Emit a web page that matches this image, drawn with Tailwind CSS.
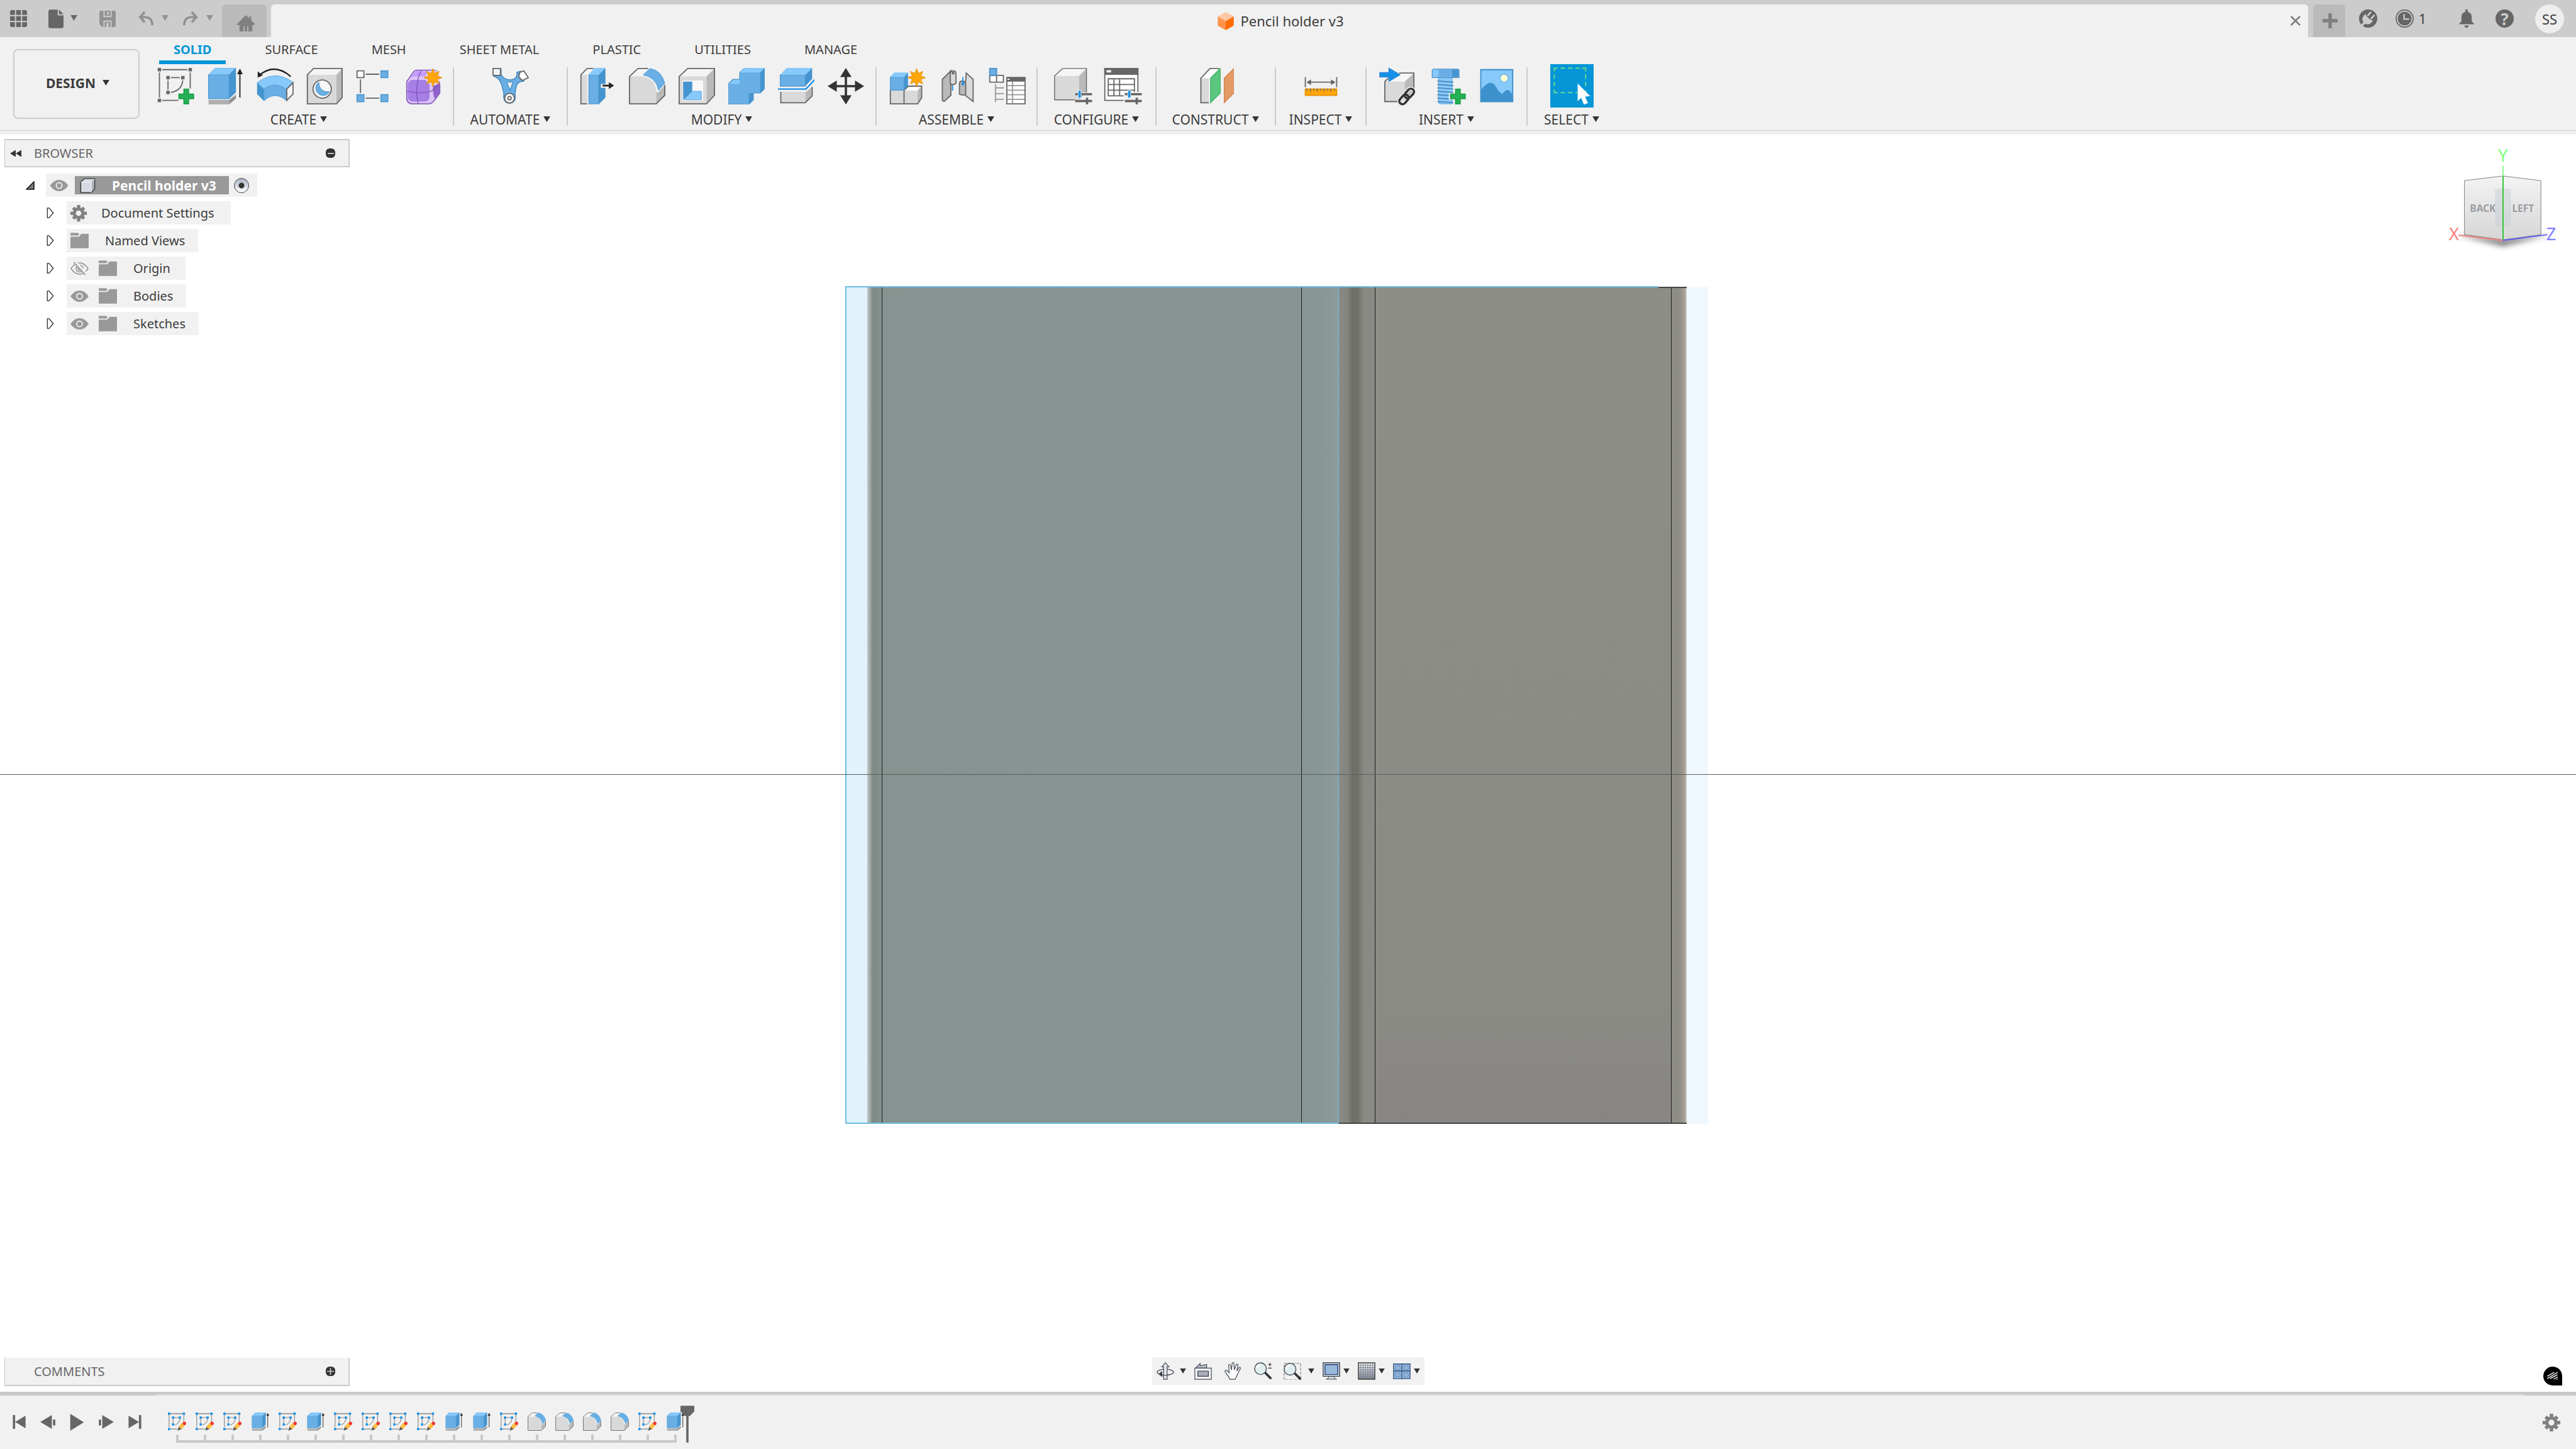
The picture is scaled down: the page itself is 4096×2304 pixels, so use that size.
<!DOCTYPE html>
<html lang="en">
	<head>
		<meta charset="UTF-8" />
		<meta name="viewport" content="width=device-width, initial-scale=1.0" />
		<title>Pencil holder v3</title>
		<script src="https://cdn.jsdelivr.net/npm/@tailwindcss/browser@4"></script>
	</head>
	<body class="h-screen flex flex-col overflow-hidden bg-white text-[21px] leading-7 text-[#3c3c3c] font-['Noto_Sans',sans-serif]">
		<!-- shared icons -->
		<svg class="hidden">
			<symbol id="caret" viewBox="0 0 12 10"><path d="M0 0h12L6 10z" fill="currentColor" /></symbol>
			<symbol id="gear" viewBox="-16 -16 32 32">
				<g fill="currentColor">
					<path fill-rule="evenodd" d="M-10.5 0a10.5 10.5 0 1 0 21 0a10.5 10.5 0 1 0 -21 0zM-5 0a5 5 0 1 1 10 0a5 5 0 1 1 -10 0z" />
					<path d="M-3-15h6v6h-6zM-3 9h6v6h-6zM-15-3h6v6h-6zM9-3h6v6H9z" />
					<path transform="rotate(45)" d="M-3-14h6v5h-6zM-3 9h6v5h-6zM-14-3h5v6h-5zM9-3h5v6H9z" />
				</g>
			</symbol>
			<symbol id="folder" viewBox="0 0 32 28">
				<path d="M0 0h13l2.5 2l-2 2.5H0zM0 6.5h15l4-5h13V27H0z" fill="#999" />
			</symbol>
			<symbol id="eye" viewBox="0 0 32 22">
				<path d="M0 11Q7 1 16 1t16 10Q25 21 16 21T0 11z" fill="#999" />
				<circle cx="16" cy="11" r="5" fill="#999" stroke="#f1f1f1" stroke-width="2" />
			</symbol>
			<symbol id="eye-off" viewBox="0 0 32 24">
				<g fill="none" stroke="#999" stroke-width="2">
					<path d="M1 12Q8 2 16 2t15 10Q24 22 16 22T1 12z" />
					<circle cx="16" cy="12" r="6" />
					<circle cx="16" cy="12" r="2.5" />
				</g>
				<path d="M8 0L28 22" stroke="#f1f1f1" stroke-width="5" />
				<path d="M6 1L26 23" stroke="#999" stroke-width="2" />
			</symbol>
			<symbol id="expand" viewBox="0 0 12 18"><path d="M1 1h3l7 8l-7 8H1z" fill="#fff" stroke="#222" stroke-width="1.3" /></symbol>
			<symbol id="plus" viewBox="0 0 28 28"><path d="M10 1h8v9h9v8h-9v9h-8v-9H1v-8h9z" fill="#25b254" stroke="#1f9e49" stroke-width="2" /></symbol>
			<symbol id="star" viewBox="-17 -17 34 34">
				<path d="M0-16L3-7.5L11-11L7.5-3L16 0L7.5 3L11 11L3 7.5L0 16L-3 7.5L-11 11L-7.5 3L-16 0L-7.5-3L-11-11L-3-7.5z" fill="#ffa60a" stroke="#e08e00" stroke-width="1" />
			</symbol>
			<symbol id="extrude" viewBox="0 0 64 64">
				<path d="M4 56h36v8H4z" fill="#b0b0b0" />
				<path d="M40 56l12-9v7L40 64z" fill="#949494" />
				<path d="M4 12h36v42H4z" fill="#69afe5" stroke="#539bd1" stroke-width="1.5" />
				<path d="M4 12L16 0h36L40 12z" fill="#87c9fb" stroke="#5ea7dc" stroke-width="1" />
				<path d="M40 12L52 0v43L40 54z" fill="#4594cf" />
				<path d="M59 8v44" stroke="#222" stroke-width="2" />
				<path d="M59 1l5 10H54z" fill="#222" />
			</symbol>
			<symbol id="fillet" viewBox="0 0 64 64">
				<path d="M0 15L15 0h21L22 14z" fill="#f5f5f5" />
				<path d="M1 15h22Q48 18 48 44v19H1z" fill="#d9d9d9" />
				<path d="M48 43l15-14v19L48 63z" fill="#b9b9b9" />
				<path d="M34 1H16L1 15v48h47l15-15V29" fill="none" stroke="#666" stroke-width="2" />
				<path d="M37 0Q58 4 64 27L51 42Q49 18 23 13z" fill="#69afe5" stroke="#f5f5f5" stroke-width="2" />
				<path d="M37 1Q57 4 63 27L52 39Q48 17 25 12z" fill="#69afe5" stroke="#539bd1" stroke-width="1" />
			</symbol>
			<symbol id="sketch" viewBox="0 0 32 32">
				<g fill="none" stroke="#999" stroke-width="1.5">
					<path d="M4 2h22" stroke-width="2" />
					<path d="M2 4v22M28 4v14M4 29h13M11 9h8M9 11v8M21 11q-1 8-9 11" />
				</g>
				<path d="M0 0h4v4H0zM26 0h4v4h-4zM0 27h4v4H0zM7 7h4v4H7zM19 7h4v4h-4zM7 19h4v4H7z" fill="#1890e8" />
				<path d="M19 25l6-7l5 4l-6 7z" fill="#ffc043" stroke="#e9a52e" stroke-width=".5" />
				<path d="M19 25l5 4l-7 3z" fill="#555" />
				<circle cx="29" cy="19" r="3" fill="#f23535" />
			</symbol>
			<symbol id="sliders" viewBox="0 0 30 26">
				<path d="M0 5h30v5H0zM0 17h30v5H0z" fill="#f1f1f1" />
				<path d="M0 6h30v4H0zM0 18h30v4H0zM19 14h4v12h-4z" fill="#666" />
				<path d="M5 1h6v14H5z" fill="#f1f1f1" />
				<path d="M6 2h4v12H6z" fill="#1890e8" />
			</symbol>
		</svg>

		<!-- title bar -->
		<header class="flex h-[59px] shrink-0 items-end bg-[#ccc] text-[#666]">
			<div class="flex h-full w-[353px] shrink-0 items-center pl-4">
				<button aria-label="Data panel">
					<svg class="h-[27px] w-[27px]" viewBox="0 0 28 28" fill="#666"><path d="M2 0h6v8H0V2zM10 0h8v8h-8zM20 0h6l2 2v6h-8zM0 10h8v8H0zM10 10h8v8h-8zM20 10h8v8h-8zM0 20h8v8H2l-2-2zM10 20h8v8h-8zM20 20h8v6l-2 2h-6z" /></svg>
				</button>
				<button class="ml-[34px] flex items-center gap-2.5" aria-label="File">
					<svg class="h-[30px] w-6" viewBox="0 0 26 32" fill="#666"><path d="M2 0h14v10h10v20l-2 2H2l-2-2V2zM18 0l8 8h-8z" /></svg>
					<svg class="mb-0.5 h-[9px] w-[13px]"><use href="#caret" /></svg>
				</button>
				<button class="ml-[34px]" aria-label="Save">
					<svg class="h-[26px] w-[26px]" viewBox="0 0 28 28" fill="#929292"><path fill-rule="evenodd" d="M2 0h24l2 2v24l-2 2H5l-5-5V2zM7 0v11h14V0h-2v9H9V0zM7 28V17h14v11h-2v-9H9v9zM12 21h4v7h-4zM13 2h3v5h-3z" /></svg>
				</button>
				<button class="ml-[36px] flex items-center gap-3 text-[#929292]" aria-label="Undo">
					<svg class="h-6 w-6" viewBox="0 0 26 26" fill="none" stroke="#929292" stroke-width="4"><path d="M11 1L3 10l8 9M3 10h8q13 0 13 14" /></svg>
					<svg class="mb-0.5 h-[9px] w-[13px]"><use href="#caret" /></svg>
				</button>
				<button class="ml-[22px] flex items-center gap-3 text-[#929292]" aria-label="Redo">
					<svg class="h-6 w-6" viewBox="0 0 26 26" fill="none" stroke="#929292" stroke-width="4"><path d="M15 1l8 9l-8 9M23 10h-8Q2 10 2 24" /></svg>
					<svg class="mb-0.5 h-[9px] w-[13px]"><use href="#caret" /></svg>
				</button>
			</div>
			<button class="flex h-[52px] w-[71px] shrink-0 items-center justify-center rounded-t-md bg-[#bababa] pl-1 pt-2" aria-label="Home">
				<svg class="h-[26px] w-[28px]" viewBox="0 0 30 28" fill="#808080"><path d="M15 0l6 6V2h3v7l6 6v2h-4v11h-7v-9h-2v9h-4v-9h-2v9H4V17H0v-2z" /><path d="M13 20h4v8h-4z" /></svg>
			</button>
			<div class="ml-[7px] flex h-[52px] grow items-center rounded-t-md bg-[#f1f1f1] pr-3">
				<h1 class="flex grow items-center justify-center gap-2.5 text-[22px] text-[#3c3c3c]">
					<svg class="h-[29px] w-[26px]" viewBox="0 0 28 32"><path d="M14 0l14 8l-14 8L0 8z" fill="#ffc7a3" /><path d="M0 8l14 8v16L0 24z" fill="#ff924a" /><path d="M28 8l-14 8v16l14-8z" fill="#ff6b00" /></svg>
					Pencil holder v3
				</h1>
				<button aria-label="Close">
					<svg class="h-4 w-4" viewBox="0 0 18 18" stroke="#808080" stroke-width="3"><path d="M1 1l16 16M17 1L1 17" /></svg>
				</button>
			</div>
			<button class="ml-2 flex h-[52px] w-[51px] shrink-0 items-center justify-center rounded-t-md bg-[#bababa] pl-1" aria-label="New tab">
				<svg class="h-6 w-6" viewBox="0 0 26 26" fill="#808080"><path d="M10 0h6v10h10v6H16v10h-6V16H0v-6h10z" /></svg>
			</button>
			<div class="flex h-full shrink-0 items-center pl-[22px] pr-[19px]">
				<button aria-label="Extensions">
					<svg class="h-[29px] w-[29px]" viewBox="0 0 32 32"><circle cx="16" cy="16" r="16" fill="#666" /><g transform="rotate(42 16 16)"><path d="M7 13q9 4 18 0v4q0 8-7 9v8h-4v-8q-7-1-7-9z" fill="#ccc" /><path d="M12 4v9M20 4v9" stroke="#ccc" stroke-width="3" /></g></svg>
				</button>
				<button class="ml-[29px] flex items-center gap-2 text-[#3c3c3c]" aria-label="Job status">
					<svg class="h-[29px] w-[29px]" viewBox="0 0 32 32"><circle cx="16" cy="16" r="15" fill="none" stroke="#666" stroke-width="2" /><circle cx="16" cy="16" r="12" fill="#666" /><path d="M15 8v9h9" fill="none" stroke="#ccc" stroke-width="2.5" /></svg>
					1
				</button>
				<button class="ml-[52px]" aria-label="Notifications">
					<svg class="h-[29px] w-6" viewBox="0 0 26 32" fill="#666"><path d="M11 0h4v4q7 2 7 9v8l4 4v1H0v-1l4-4v-8q0-7 7-9zM9 28h8q-1 4-4 4t-4-4z" /></svg>
				</button>
				<button class="ml-[34px] flex size-[29px] items-center justify-center rounded-full bg-[#666] text-[26px] font-bold text-[#ccc]" aria-label="Help">?</button>
				<button class="ml-[34px] flex size-[46px] items-center justify-center rounded-full bg-[#eee] text-[22px] text-[#3c3c3c]" aria-label="Account">SS</button>
			</div>
		</header>

		<!-- ribbon -->
		<div class="flex h-[149px] shrink-0 border-b border-[#ccc] bg-[#f1f1f1]">
			<button class="ml-[21px] mt-[19px] flex h-[111px] w-[201px] shrink-0 items-center justify-center gap-[11px] rounded-lg border-2 border-[#ccc] pb-1 pl-1 font-bold">
				DESIGN <svg class="h-[9px] w-[11px] text-[#333]"><use href="#caret" /></svg>
			</button>
			<div class="flex flex-col">
				<nav class="ml-[31px] flex h-[43px] gap-[39px] text-[20px]">
					<a href="#" class="border-b-[6px] border-[#0696d7] px-[23px] pt-[6px] font-bold text-[#0696d7]">SOLID</a>
					<a href="#" class="px-[23px] pt-[6px]">SURFACE</a>
					<a href="#" class="px-[23px] pt-[6px]">MESH</a>
					<a href="#" class="px-[23px] pt-[6px]">SHEET METAL</a>
					<a href="#" class="px-[23px] pt-[6px]">PLASTIC</a>
					<a href="#" class="px-[23px] pt-[6px]">UTILITIES</a>
					<a href="#" class="px-[23px] pt-[6px]">MANAGE</a>
				</nav>
				<div class="ml-2 mt-[5px] flex h-[93px]">
					<section class="flex w-[492px] flex-col items-center justify-between border-r-2 border-[#ccc] pt-px">
						<div class="flex h-[58px] gap-[21px]">
							<button aria-label="Create sketch">
								<svg class="size-[58px] overflow-visible" viewBox="0 0 64 64"><path d="M2 0h6v6H2zM56 0h6v6h-6zM2 54h6v6H2zM17 14h6v6h-6zM43 14h6v6h-6zM17 40h6v6h-6z" fill="#666" /><path d="M10 3h44M5 8v44M59 8v28M10 57h28M25 17h16M20 22v16M46 22q-2 18-21 21" fill="none" stroke="#666" stroke-width="2" /><use href="#plus" x="38" y="36" width="28" height="28" /></svg>
							</button>
							<button aria-label="Extrude"><svg class="size-[58px]"><use href="#extrude" /></svg></button>
							<button aria-label="Revolve">
								<svg class="size-[58px] overflow-visible" viewBox="0 0 64 64"><path d="M2 26Q33 2 65 25L53 37Q33 23 14 37z" fill="#87c9fb" stroke="#5aa2d8" /><path d="M14 37Q33 23 53 37v20Q33 40 14 58z" fill="#69afe5" stroke="#539bd1" /><path d="M2 26l12 11v21L2 46z" fill="#4594cf" /><path d="M54 37l11-11v20L54 57z" fill="#f5f5f5" stroke="#666" stroke-width="2" /><path d="M61 15Q33-9 7 12" fill="none" stroke="#222" stroke-width="2.5" /><path d="M3 17V6l9 7z" fill="#222" /></svg>
							</button>
							<button aria-label="Hole">
								<svg class="size-[58px] overflow-visible" viewBox="0 0 64 64"><path d="M3 12L14 1h50L54 12z" fill="#f4f4f4" /><path d="M3 12h51v51H3z" fill="#d9d9d9" /><path d="M54 12L64 1v51L54 63z" fill="#b9b9b9" /><path d="M3 12L14 1h50v51L54 63H3z" fill="none" stroke="#666" stroke-width="2" /><circle cx="29" cy="37" r="16" fill="#f7f7f7" stroke="#666" stroke-width="2" /><path d="M23 25a13 13 0 1 0 19 17Q24 43 23 25z" fill="#69afe5" stroke="#4594cf" /></svg>
							</button>
							<button aria-label="Rectangular pattern">
								<svg class="size-[58px]" viewBox="0 0 64 64"><path d="M18 11h24M9 20v24M18 53h24" stroke="#666" stroke-width="2" /><path d="M3 5h12v12H3z" fill="#fff" stroke="#666" stroke-width="2" /><path d="M45 5h12v12H45zM3 47h12v12H3zM45 47h12v12H45z" fill="#69afe5" stroke="#4f9ad2" stroke-width="2" /></svg>
							</button>
							<button aria-label="Create form">
								<svg class="size-[58px] overflow-visible" viewBox="0 0 64 64"><path d="M3 24L15 7q2-3 7-3h28q6 0 7 5l4 21v14L50 59q-4 4-9 4H14Q3 63 3 52z" fill="#dcc4f7" stroke="#8a63bd" stroke-width="2" /><path d="M10 17L17 8q3-3 7-2h14l2 10q-16-3-30 1z" fill="#c59bff" /><rect x="5" y="21" width="38" height="38" rx="8" fill="#a77de6" /><path d="M49 32l12-5v16l-8 12q-5-8-4-23z" fill="#8f62cb" /><path d="M23 63q-5-22 0-45l5-13M3 41q25 5 43 0l14-12" fill="none" stroke="#7f57b4" stroke-width="1.5" /><circle cx="49" cy="17" r="13" fill="#e9d9fb" /><use href="#star" x="32" y="0" width="34" height="34" /></svg>
							</button>
						</div>
						<button class="-mb-1 flex items-center gap-1.5 leading-7">CREATE <svg class="mb-0.5 h-[9px] w-[11px] text-[#333]"><use href="#caret" /></svg></button>
					</section>
					<section class="flex w-[181px] flex-col items-center justify-between border-r-2 border-[#ccc] pt-px">
						<div class="flex h-[58px] gap-[21px]">
							<button aria-label="Automated modeling">
								<svg class="size-[58px]" viewBox="0 0 64 64"><path d="M15 2v9q4 10 17 10q12-1 11-13l6-2l6 17q-12 0-14 12q-2 9-1 17a10 10 0 1 1-20 0q1-8-2-16Q14 17 3 15V2z" fill="#69afe5" stroke="#4f90c4" stroke-width="2" /><path d="M25 25h11l-5 14z" fill="#f1f1f1" stroke="#4f90c4" stroke-width="1.5" /><path d="M1 1h13v12H1z" fill="#f4f4f4" stroke="#666" stroke-width="2" /><path d="M55 5l8 12l-10 5l-7-6l2-8z" fill="#fff" stroke="#666" stroke-width="2" /><circle cx="30" cy="53" r="8.5" fill="#fff" stroke="#666" stroke-width="2" /><circle cx="30" cy="53" r="3" fill="none" stroke="#666" stroke-width="2" /></svg>
							</button>
						</div>
						<button class="-mb-1 flex items-center gap-1.5 leading-7">AUTOMATE <svg class="mb-0.5 h-[9px] w-[11px] text-[#333]"><use href="#caret" /></svg></button>
					</section>
					<section class="flex w-[491px] flex-col items-center justify-between border-r-2 border-[#ccc] pt-px">
						<div class="flex h-[58px] gap-[21px]">
							<button aria-label="Press pull">
								<svg class="size-[58px]" viewBox="0 0 64 64"><path d="M3 12L14 1h11L14 12z" fill="#f5f5f5" /><path d="M3 12h11v51H3z" fill="#d9d9d9" /><path d="M25 1H14L3 12v51h11" fill="none" stroke="#666" stroke-width="2" /><path d="M17 12h17v51H17z" fill="#69afe5" stroke="#539bd1" stroke-width="1.5" /><path d="M16 12L27 0h19L34 12z" fill="#87c9fb" /><path d="M34 12L46 0v52L34 64z" fill="#4594cf" /><path d="M38 28h13v-5l13 8l-13 9v-5H38z" fill="#f1f1f1" /><path d="M41 31h14" stroke="#222" stroke-width="3" /><path d="M52 25l9 6l-9 6z" fill="#222" /></svg>
							</button>
							<button aria-label="Fillet"><svg class="size-[58px]"><use href="#fillet" /></svg></button>
							<button aria-label="Shell">
								<svg class="size-[58px]" viewBox="0 0 64 64"><path d="M1 15L16 1h47L49 15z" fill="#f4f4f4" /><path d="M1 15h48v48H1z" fill="#d9d9d9" /><path d="M49 15L63 1v47L49 63z" fill="#b9b9b9" /><path d="M1 15L16 1h47v47L49 63H1z" fill="none" stroke="#666" stroke-width="2" /><path d="M7 22h36v36H7z" fill="#f8f8f8" /><path d="M8 24h16v17L8 56z" fill="#4594cf" /><path d="M24 41h16v15H9z" fill="#87c9fb" stroke="#5aa2d8" /></svg>
							</button>
							<button aria-label="Combine">
								<svg class="size-[58px]" viewBox="0 0 64 64"><path d="M0 28l8-8h12V8l9-8h35v36l-8 8H44v12l-8 8H0z" fill="#69afe5" stroke="#539bd1" stroke-width="1.5" /><path d="M20 8l9-8h35l-8 8zM1 28l8-7h11v7z" fill="#87c9fb" /><path d="M56 8l8-8v36l-8 8zM36 44h8v12l-8 8z" fill="#4594cf" /></svg>
							</button>
							<button aria-label="Split body">
								<svg class="size-[58px]" viewBox="0 0 64 64"><path d="M4 12h44v20H4z" fill="#69afe5" stroke="#539bd1" stroke-width="1.5" /><path d="M4 12L15 0h45L48 12z" fill="#87c9fb" /><path d="M48 12L60 0v19L48 32z" fill="#4594cf" /><path d="M5 42h43v19H5z" fill="#d9d9d9" /><path d="M48 43l12-10v17L48 61z" fill="#b9b9b9" /><path d="M5 42v19h43l12-12V33" fill="none" stroke="#666" stroke-width="2" /><path d="M0 37h49l15-16" fill="none" stroke="#1890e8" stroke-width="2.5" /></svg>
							</button>
							<button aria-label="Move">
								<svg class="size-[58px]" viewBox="0 0 64 64" fill="#333"><path d="M30 14h4v36h-4zM14 30h36v4H14zM32 0l10 16H22zM32 64L22 48h20zM0 32l16-10v20zM64 32L48 42V22z" /></svg>
							</button>
						</div>
						<button class="-mb-1 flex items-center gap-1.5 leading-7">MODIFY <svg class="mb-0.5 h-[9px] w-[11px] text-[#333]"><use href="#caret" /></svg></button>
					</section>
					<section class="flex w-[256px] flex-col items-center justify-between border-r-2 border-[#ccc] pt-px">
						<div class="flex h-[58px] gap-[21px]">
							<button aria-label="New component">
								<svg class="size-[58px] overflow-visible" viewBox="0 0 64 64"><path d="M3 39h49v24H3z" fill="#d9d9d9" /><path d="M27 39l8-7h23l-7 8z" fill="#fff" /><path d="M51 39l7-7v20l-7 11z" fill="#b9b9b9" /><path d="M3 39v24h48l7-11V32H35l-8 7v24" fill="none" stroke="#666" stroke-width="2" /><path d="M3 16h24v23H3z" fill="#69afe5" stroke="#539bd1" stroke-width="1.5" /><path d="M2 16l8-8h24l-7 8z" fill="#87c9fb" /><path d="M27 16l7-8v24l-7 7z" fill="#4594cf" /><circle cx="49" cy="17" r="13" fill="#f1f1f1" /><use href="#star" x="32" y="0" width="34" height="34" /></svg>
							</button>
							<button aria-label="Joint">
								<svg class="size-[58px]" viewBox="0 0 64 64" stroke="#666" stroke-width="2"><path d="M7 20L22 5v43L10 59l-3-2z" fill="#b9b9b9" /><path d="M21 10q0-5 5-5t5 5v17q-4 4-10 1z" fill="#d9d9d9" /><circle cx="26" cy="9" r="1.5" fill="#666" /><path d="M49 9l12 11v39L46 47z" fill="#d9d9d9" /><path d="M37 28q0-5 5-5t6 5v18q-5 3-11 0z" fill="#b9b9b9" /><path d="M25 30v10M43 16v12" stroke="#1890e8" /><circle cx="43" cy="28" r="1.5" fill="#1890e8" stroke="#1890e8" /></svg>
							</button>
							<button aria-label="Bill of materials">
								<svg class="size-[58px] overflow-visible" viewBox="0 0 64 64"><path d="M3 13h12v12H3zM15 13h12v12H15z" fill="#fff" stroke="#666" stroke-width="2" /><path d="M3 1h12v12H3z" fill="#69afe5" stroke="#4f90c4" stroke-width="2" /><path d="M13 28v32M13 35h15M13 45h15M13 55h15" stroke="#999" stroke-width="2" /><path d="M33 17h32v46H33z" fill="#fff" stroke="#666" stroke-width="2" /><path d="M33 16h32v8H33z" fill="#666" /><path d="M34 19h4v2h-4z" fill="#fff" /><path d="M34 31h30M34 39h30M34 47h30M34 55h30M43 24v38" stroke="#999" stroke-width="2" /></svg>
							</button>
						</div>
						<button class="-mb-1 flex items-center gap-1.5 leading-7">ASSEMBLE <svg class="mb-0.5 h-[9px] w-[11px] text-[#333]"><use href="#caret" /></svg></button>
					</section>
					<section class="flex w-[189px] flex-col items-center justify-between border-r-2 border-[#ccc] pt-px">
						<div class="flex h-[58px] gap-[21px]">
							<button aria-label="Configure model">
								<svg class="size-[58px] overflow-visible" viewBox="0 0 64 64"><path d="M2 14L16 1h42L45 14z" fill="#f6f6f6" /><path d="M2 14h43v42H2z" fill="#d9d9d9" /><path d="M45 14L58 1v42L45 56z" fill="#b9b9b9" /><path d="M45 56H2V14L16 1h42v42" fill="none" stroke="#666" stroke-width="1.5" /><use href="#sliders" x="38" y="38" width="30" height="26" /></svg>
							</button>
							<button aria-label="Configuration table">
								<svg class="size-[58px] overflow-visible" viewBox="0 0 64 64"><path d="M3 1h58v56H3z" fill="#fff" stroke="#666" stroke-width="2" /><path d="M2 0h60v12H2z" fill="#666" /><path d="M6 4h8v4H6z" fill="#fff" /><path d="M9 19h46v30H9zM9 29h46M9 39h46M19 19v30M29 19v30" fill="none" stroke="#666" stroke-width="2" /><path d="M36 42h28v22H36z" fill="#f1f1f1" /><use href="#sliders" x="38" y="38" width="30" height="26" /></svg>
							</button>
						</div>
						<button class="-mb-1 flex items-center gap-1.5 leading-7">CONFIGURE <svg class="mb-0.5 h-[9px] w-[11px] text-[#333]"><use href="#caret" /></svg></button>
					</section>
					<section class="flex w-[190px] flex-col items-center justify-between border-r-2 border-[#ccc] pt-px">
						<div class="flex h-[58px] gap-[21px]">
							<button aria-label="Offset plane">
								<svg class="size-[58px]" viewBox="0 0 64 64"><path d="M6 18L22 1h15L21 18z" fill="#fff" /><path d="M6 18h14v43H6z" fill="#d9d9d9" /><path d="M38 1H22L6 18v43h14" fill="none" stroke="#666" stroke-width="2" /><path d="M23 18L40 1v43L23 61z" fill="#5bc77f" stroke="#44b56a" stroke-width="1.5" /><path d="M47 18L64 1v43L47 61z" fill="#e69a66" stroke="#d1854f" stroke-width="1.5" /></svg>
							</button>
						</div>
						<button class="-mb-1 flex items-center gap-1.5 leading-7">CONSTRUCT <svg class="mb-0.5 h-[9px] w-[11px] text-[#333]"><use href="#caret" /></svg></button>
					</section>
					<section class="flex w-[144px] flex-col items-center justify-between border-r-2 border-[#ccc] pt-px">
						<div class="flex h-[58px] gap-[21px]">
							<button aria-label="Measure">
								<svg class="size-[58px]" viewBox="0 0 64 64"><path d="M5 16v18M60 16v18M10 25h45" stroke="#666" stroke-width="2" /><path d="M7 25l8-5v10zM58 25l-8-5v10z" fill="#666" /><path d="M5 37h55v11H5z" fill="#ffa60a" stroke="#e89400" stroke-width="2" /><path d="M8 36v4M14 36v6M20 36v4M26 36v6M32 36v4M38 36v6M44 36v4M50 36v6M56 36v4" stroke="#666" stroke-width="1.5" /></svg>
							</button>
						</div>
						<button class="-mb-1 flex items-center gap-1.5 leading-7">INSPECT <svg class="mb-0.5 h-[9px] w-[11px] text-[#333]"><use href="#caret" /></svg></button>
					</section>
					<section class="flex w-[256px] flex-col items-center justify-between border-r-2 border-[#ccc] pt-px">
						<div class="flex h-[58px] gap-[21px]">
							<button aria-label="Insert derive">
								<svg class="size-[58px] overflow-visible" viewBox="0 0 64 64"><path d="M11 24L26 9h36L46 24z" fill="#f6f6f6" /><path d="M11 24h35v35H11z" fill="#d9d9d9" /><path d="M46 24L62 9v36L46 59z" fill="#b9b9b9" /><path d="M40 59H11V24l6-6M36 9h26v30" fill="none" stroke="#666" stroke-width="2" /><path d="M2 8h16V0l20 12l-20 12v-8H2z" fill="#1890e8" stroke="#1478c8" /><g transform="rotate(-48 50 50)" fill="none"><rect x="33" y="44" width="18" height="11" rx="5.5" stroke="#f1f1f1" stroke-width="7" /><rect x="48" y="44" width="18" height="11" rx="5.5" stroke="#f1f1f1" stroke-width="7" /><rect x="33" y="44" width="19" height="11" rx="5.5" stroke="#333" stroke-width="4" /><rect x="47" y="44" width="19" height="11" rx="5.5" stroke="#333" stroke-width="4" /></g></svg>
							</button>
							<button aria-label="Insert fastener">
								<svg class="size-[58px] overflow-visible" viewBox="0 0 64 64"><path d="M18 17h24v46H20l-2-3z" fill="#87c9fb" stroke="#69afe5" stroke-width="1.5" /><path d="M7 4l2-2h43l2 2v13H7z" fill="#87c9fb" stroke="#4f90c4" stroke-width="1.5" /><path d="M18 3h24v13H18z" fill="#69afe5" /><path d="M42 3h11v13H42z" fill="#4594cf" /><path d="M16 23l28 2M16 29l28 2M16 35l28 2M16 41l28 2M16 47l28 2M16 53l28 2M16 59l28 2" stroke="#4682b0" stroke-width="1.8" /><path d="M46 34h12v10h10v12H58v9H46v-9H36V44h10z" fill="#f1f1f1" /><use href="#plus" x="38" y="36" width="28" height="28" /></svg>
							</button>
							<button aria-label="Insert canvas">
								<svg class="size-[58px]" viewBox="0 0 64 64"><path d="M5 3h56v56H5z" fill="#87c9fb" stroke="#3f8cc6" stroke-width="2" /><circle cx="46" cy="18" r="7" fill="#ffffd2" stroke="#6fb4e4" stroke-width="1.5" /><path d="M5 39Q15 26 22 26t13 13l7 7l5-5q6-5 9 0l5 6v12H5z" fill="#3d91cc" /></svg>
							</button>
						</div>
						<button class="-mb-1 flex items-center gap-1.5 leading-7">INSERT <svg class="mb-0.5 h-[9px] w-[11px] text-[#333]"><use href="#caret" /></svg></button>
					</section>
					<section class="flex w-[140px] flex-col items-center justify-between pt-px">
						<button class="-mt-1.5 size-[69px] bg-[#0696d7]" aria-label="Select">
							<svg class="size-[69px]" viewBox="0 0 76 76"><path d="M7 13V7h6M56 7h6v6M7 44v6h6M18 7h8M31 7h8M44 7h8M18 50h8M31 50h8M44 50h4M7 18v8M7 31v8M62 18v8M62 31v7M62 46v4h-4" fill="none" stroke="#6fe08a" stroke-width="2" /><path d="M48 34l22 22l-9 1l5 11l-7 3l-5-12l-6 6z" fill="#fff" /></svg>
						</button>
						<button class="-mb-1 flex items-center gap-1.5 leading-7">SELECT <svg class="mb-0.5 h-[9px] w-[11px] text-[#333]"><use href="#caret" /></svg></button>
					</section>
				</div>
			</div>
		</div>

		<!-- viewport -->
		<main class="relative flex grow flex-col justify-between border-t-[6px] border-[#f1f1f1] px-[7px] pb-[9px] pt-[7px]">
			<svg class="absolute inset-0 h-full w-full" viewBox="0 234 4480 2186" preserveAspectRatio="none">
				<defs>
					<linearGradient id="leftFace"><stop offset="0" stop-color="#c3cbc8" /><stop offset=".012" stop-color="#7e8885" /><stop offset=".033" stop-color="#869391" /><stop offset=".92" stop-color="#879493" /><stop offset=".96" stop-color="#879796" /><stop offset="1" stop-color="#8e9c9b" /></linearGradient>
					<linearGradient id="fold"><stop offset="0" stop-color="#8b8b86" /><stop offset=".25" stop-color="#84847e" /><stop offset=".37" stop-color="#70706a" /><stop offset=".52" stop-color="#71716b" /><stop offset=".68" stop-color="#898984" /><stop offset="1" stop-color="#8b8b85" /></linearGradient>
					<linearGradient id="rightEdge"><stop offset="0" stop-color="#8d8d87" /><stop offset=".45" stop-color="#8d8c85" /><stop offset=".8" stop-color="#9f9a90" /><stop offset="1" stop-color="#bab8af" /></linearGradient>
					<linearGradient id="rightFace" x2="0" y2="1"><stop offset="0" stop-color="#8e8e88" /><stop offset=".85" stop-color="#8b8b85" /><stop offset="1" stop-color="#888583" /></linearGradient>
					<linearGradient id="cubeFace" x2="0" y2="1"><stop offset="0" stop-color="#f3f3f3" /><stop offset="1" stop-color="#d6d6d6" /></linearGradient>
					<filter id="soft" x="-20%" y="-60%" width="140%" height="220%"><feGaussianBlur stdDeviation="5" /></filter>
				</defs>
				<path d="M1470 499h39v1455h-39z" fill="#e0f3fc" />
				<path d="M2933 499h38v1455h-38z" fill="#f0f8ff" />
				<path d="M1508 499h820v1455h-820z" fill="url(#leftFace)" />
				<path d="M2328 499h64v1455h-64z" fill="url(#fold)" />
				<path d="M2392 499h515v1455h-515z" fill="url(#rightFace)" />
				<path d="M2907 499h26v1455h-26z" fill="url(#rightEdge)" />
				<g fill="none" shape-rendering="crispEdges">
					<path d="M1534 499v1455M2263 499v1455M2392 499v1455M2907 499v1455" stroke="#1c1c1c" stroke-width="1.1" />
					<path d="M1534 1953h1399M2884 500h49" stroke="#444" stroke-width="2" />
					<path d="M2328 1953V499M2328 1953H1471V499H2884" stroke="#6bbde2" stroke-width="2" />
					<path d="M0 1347h4480" stroke="#5c5c5c" stroke-width="1.1" />
				</g>
				<!-- view cube -->
				<path d="M4270 408l83 8l83-8l-83 20z" fill="#777" filter="url(#soft)" />
				<path d="M4286 314l67-8v111l-67-9zM4353 306l66 8v94l-66 9z" fill="url(#cubeFace)" stroke="#777" />
				<path d="M4339 329l14-2l14 2v65l-14 2l-14-2z" fill="#c9cfd6" fill-opacity=".5" />
				<path d="M4353 288v18" stroke="#80ff80" stroke-width="2" />
				<path d="M4353 306v112" stroke="#2bc92b" stroke-width="2" />
				<path d="M4276 409l77 9" stroke="#f08080" stroke-width="2" />
				<path d="M4353 418l77-10" stroke="#6060f0" stroke-width="2" />
				<g font-family="'Noto Sans',sans-serif" text-anchor="middle">
					<text x="4353" y="281" font-size="30" fill="#80ff80">Y</text>
					<text x="4268" y="418" font-size="30" fill="#ff8080">X</text>
					<text x="4437" y="418" font-size="30" fill="#8080ff">Z</text>
					<text x="4318" y="368" font-size="17" font-weight="bold" fill="#9a9ea3">BACK</text>
					<text x="4388" y="368" font-size="17" font-weight="bold" fill="#9a9ea3">LEFT</text>
				</g>
			</svg>

			<!-- browser -->
			<aside class="relative w-[549px]">
				<div class="flex h-[45px] items-center border-y-2 border-l border-r-2 border-[#ccc] bg-[#f1f1f1] pl-2 pr-[21px] text-[#666]">
					<svg class="h-3 w-[18px]" viewBox="0 0 20 12" fill="#333"><path d="M10 0v12L0 6zM20 0v12L10 6z" /></svg>
					<h2 class="ml-5 grow text-[20px]">BROWSER</h2>
					<button class="flex size-[15px] items-center justify-center rounded-md bg-[#333]" aria-label="Collapse"><span class="h-0.5 w-2.5 bg-[#bbb]"></span></button>
				</div>
				<ul class="mt-2.5 flex flex-col gap-[7px] text-[20px]">
					<li class="flex h-[37px] items-center">
						<svg class="ml-[34px] h-[14px] w-[14px]" viewBox="0 0 14 14"><path d="M13 1v12H1z" fill="#777" stroke="#111" stroke-width="1.5" /></svg>
						<div class="ml-[18px] flex h-full items-center bg-[#f1f1f1] pl-[6px] pr-[13px]">
							<svg class="h-5 w-[30px]"><use href="#eye" /></svg>
							<span class="ml-[10px] flex h-[29px] w-[245px] items-center bg-[#999] pl-2 text-[21px] font-bold text-white">
								<svg class="mr-[26px] h-6 w-[25px]" viewBox="0 0 26 26"><path d="M1 7l6-6h18v18l-6 6H1z" fill="#d6dae3" stroke="#333" stroke-width="1.5" /><path d="M1 7h18v18M19 7l6-6" fill="none" stroke="#f7f7fb" /><path d="M20 7l4-5v16l-4 5z" fill="#a9aebb" /></svg>
								Pencil holder v3
							</span>
							<label class="ml-2 flex"><input type="radio" checked aria-label="Activate component" class="size-6 appearance-none rounded-full border border-[#444] bg-[radial-gradient(circle,#333_0_4px,transparent_5px),linear-gradient(#a9b2c4,#fff)]" /></label>
						</div>
					</li>
					<li class="flex h-[37px] items-center">
						<svg class="ml-[67px] h-[17px] w-3"><use href="#expand" /></svg>
						<div class="ml-5 flex h-full items-center bg-[#f1f1f1] pl-[5px] pr-[26px]"><svg class="mr-[22px] size-7 text-[#808080]"><use href="#gear" /></svg>Document Settings</div>
					</li>
					<li class="flex h-[37px] items-center">
						<svg class="ml-[67px] h-[17px] w-3"><use href="#expand" /></svg>
						<div class="ml-5 flex h-full items-center bg-[#f1f1f1] pl-[6px] pr-[21px]"><svg class="mr-[26px] h-[26px] w-[29px]"><use href="#folder" /></svg>Named Views</div>
					</li>
					<li class="flex h-[37px] items-center">
						<svg class="ml-[67px] h-[17px] w-3"><use href="#expand" /></svg>
						<div class="ml-5 flex h-full items-center bg-[#f1f1f1] pl-[6px] pr-6"><svg class="mr-4 h-[22px] w-[29px]"><use href="#eye-off" /></svg><svg class="mr-[26px] h-[26px] w-[29px]"><use href="#folder" /></svg>Origin</div>
					</li>
					<li class="flex h-[37px] items-center">
						<svg class="ml-[67px] h-[17px] w-3"><use href="#expand" /></svg>
						<div class="ml-5 flex h-full items-center bg-[#f1f1f1] pl-[6px] pr-[21px]"><svg class="mr-4 h-5 w-[29px]"><use href="#eye" /></svg><svg class="mr-[26px] h-[26px] w-[29px]"><use href="#folder" /></svg>Bodies</div>
					</li>
					<li class="flex h-[37px] items-center">
						<svg class="ml-[67px] h-[17px] w-3"><use href="#expand" /></svg>
						<div class="ml-5 flex h-full items-center bg-[#f1f1f1] pl-[6px] pr-[21px]"><svg class="mr-4 h-5 w-[29px]"><use href="#eye" /></svg><svg class="mr-[26px] h-[26px] w-[29px]"><use href="#folder" /></svg>Sketches</div>
					</li>
				</ul>
			</aside>

			<div class="relative grid grid-cols-[1fr_auto_1fr] items-end">
				<div class="flex h-[45px] w-[549px] items-center border-b-2 border-l border-r-2 border-[#ccc] bg-[#f1f1f1] pl-[46px] pr-[21px] text-[#666]">
					<h2 class="grow text-[20px]">COMMENTS</h2>
					<button class="flex size-[15px] items-center justify-center rounded-md bg-[#333]" aria-label="Expand"><svg class="size-[11px]" viewBox="0 0 10 10" stroke="#ccc" stroke-width="1.5"><path d="M5 0v10M0 5h10" /></svg></button>
				</div>
				<!-- navigation bar -->
				<div class="mb-0.5 flex h-11 items-center bg-[#f1f1f1] pl-[7px] pr-[6px] text-[#333]">
					<button class="flex items-center gap-2" aria-label="Orbit">
						<svg class="size-7" viewBox="0 0 30 30" fill="#e4e6ee" stroke="#444a55" stroke-width="1.3"><ellipse cx="15" cy="17" rx="14" ry="5" fill="none" /><path d="M12 29V8H9l6-7l6 7h-3v21z" /><path d="M10 22q6 1 12-1" fill="none" /><path d="M4 20l5-4v8z" fill="#333" /></svg>
						<svg class="h-2 w-3"><use href="#caret" /></svg>
					</button>
					<button class="ml-3" aria-label="Look at">
						<svg class="size-7" viewBox="0 0 30 30" stroke="#444a55" stroke-width="1.3"><path d="M3 9l7-7v4l11-2v6H3z" fill="#b9bfc8" /><path d="M1 10h28v19H1z" fill="#f4f4f8" /><path d="M6 15h18v9H6z" fill="#a9adba" stroke="#333c55" /></svg>
					</button>
					<button class="ml-5" aria-label="Pan">
						<svg class="size-7" viewBox="0 0 30 30" fill="#fbfbfc" stroke="#444a55" stroke-width="1.3"><path d="M9 29q-1-4-4-7l-4-6q0-3 3-2l4 4l-1-13q1-3 3 0l2 8l1-11q2-3 3 0l1 11l3-9q3-2 3 1l-2 10l4-6q3-1 2 2l-6 12q-1 4-3 6z" /></svg>
					</button>
					<button class="ml-[19px]" aria-label="Zoom">
						<svg class="size-7" viewBox="0 0 30 30"><path d="M19 18l9 9" stroke="#2c333c" stroke-width="4" stroke-linecap="round" /><circle cx="11" cy="11" r="10" fill="#dfeeee" stroke="#444a55" stroke-width="1.5" /><path d="M5 10q1-5 6-6" fill="none" stroke="#fff" stroke-width="3" /><path d="M27 1v6M24 4h6M24 10h6" stroke="#333" stroke-width="1.3" /></svg>
					</button>
					<button class="ml-[19px] flex items-center gap-2.5" aria-label="Fit">
						<svg class="size-7" viewBox="0 0 30 30"><path d="M1 2h28v28H1z" fill="none" stroke="#666" stroke-dasharray="5 2" /><path d="M19 19l9 9" stroke="#333" stroke-width="4" stroke-linecap="round" /><circle cx="11" cy="12" r="10" fill="#dfeeee" stroke="#444a55" stroke-width="1.5" /><path d="M5 11q1-5 6-6" fill="none" stroke="#fff" stroke-width="3" /></svg>
						<svg class="h-2 w-3"><use href="#caret" /></svg>
					</button>
					<button class="ml-3 flex items-center gap-1" aria-label="Display settings">
						<svg class="size-7" viewBox="0 0 30 30"><path d="M11 24h8l1 3l4 2H6l4-2z" fill="#d5d8e0" stroke="#444a55" /><path d="M1 1h28v23H1z" fill="#eef0f5" stroke="#333c4c" stroke-width="1.5" /><path d="M4 4h22v17H4z" fill="#98b8dc" stroke="#1f3f70" stroke-width="1.5" /></svg>
						<svg class="h-2 w-3"><use href="#caret" /></svg>
					</button>
					<button class="ml-3 flex items-center gap-1" aria-label="Grid and snaps">
						<svg class="size-7" viewBox="0 0 30 30"><defs><linearGradient id="gridFill" x2="0" y2="1"><stop offset="0" stop-color="#fff" /><stop offset="1" stop-color="#7f8794" /></linearGradient></defs><path d="M1 1h28v28H1z" fill="url(#gridFill)" stroke="#333" stroke-width="1.5" /><path d="M5 1v28M9 1v28M13 1v28M17 1v28M21 1v28M25 1v28M1 5h28M1 9h28M1 13h28M1 17h28M1 21h28M1 25h28" stroke="#777e8c" /></svg>
						<svg class="h-2 w-3"><use href="#caret" /></svg>
					</button>
					<button class="ml-3 flex items-center gap-1" aria-label="Viewports">
						<svg class="size-7" viewBox="0 0 30 30"><path d="M1 3h28v25H1z" fill="#a3c3e4" stroke="#2b4f80" stroke-width="1.5" /><path d="M15 3v25M1 15h28" stroke="#2b4f80" stroke-width="1.5" /><path d="M4 6h8v7H4zM18 6h8v7h-8zM4 18h8v7H4zM18 18h8v7h-8z" fill="#92b6dd" stroke="#5d84b5" /></svg>
						<svg class="h-2 w-3"><use href="#caret" /></svg>
					</button>
				</div>
				<button class="mb-px mr-[15px] justify-self-end" aria-label="Assistant">
					<svg class="size-[30px]" viewBox="0 0 33 33"><path d="M33 33H16.5A16.5 16.5 0 1 1 33 16.5z" fill="#000" /><path d="M7 17l12-7M7 21l18-11M12 21l13-7M18 22l7-4" stroke="#fff" stroke-width="1.5" /><circle cx="24" cy="22" r="1" fill="#fff" /></svg>
				</button>
			</div>
		</main>

		<!-- timeline -->
		<footer class="flex h-[91px] shrink-0 border-t-4 border-[#c9c9c9] bg-[#f1f1f1]">
			<div class="flex w-[247px] shrink-0 items-center gap-[23px] border-t-2 border-[#c9c9c9] pb-px pl-5 text-[#666]">
				<button aria-label="Go to start"><svg class="h-[22px] w-[21px]" viewBox="0 0 22 24" fill="currentColor"><path d="M0 0h4v24H0zM22 1v22L4 12z" /></svg></button>
				<button aria-label="Step back"><svg class="h-[22px] w-6" viewBox="0 0 26 24" fill="currentColor"><path d="M20 0v24L0 12zM22 8h4v10h-4z" /></svg></button>
				<button aria-label="Play"><svg class="h-[27px] w-[23px]" viewBox="0 0 24 30" fill="currentColor"><path d="M0 0l24 15L0 30z" /></svg></button>
				<button aria-label="Step forward"><svg class="h-[22px] w-6" viewBox="0 0 26 24" fill="currentColor"><path d="M6 0v24l20-12zM0 8h4v10H0z" /></svg></button>
				<button aria-label="Go to end"><svg class="h-[22px] w-[21px]" viewBox="0 0 22 24" fill="currentColor"><path d="M18 0h4v24h-4zM0 1v22l18-11z" /></svg></button>
			</div>
			<div class="flex grow border-t-2 border-[#dedede] pl-5">
				<div id="timeline" class="flex pt-[27px]"></div>
				<svg class="-ml-[6px] mt-4 h-[59px] w-[22px]" viewBox="0 0 24 64" fill="#666"><path d="M0 0h24v10l-8 8h-2v46h-4V18H8L0 10z" /></svg>
			</div>
			<div class="flex w-[82px] shrink-0 justify-end border-t-2 border-[#c9c9c9] pr-6 pt-7">
				<button class="h-7" aria-label="Timeline settings"><svg class="size-[30px] text-[#808080]"><use href="#gear" /></svg></button>
			</div>
		</footer>

		<script>
			const features = [
				"sketch", "sketch", "sketch", "extrude", "sketch", "extrude", "sketch",
				"sketch", "sketch", "sketch", "extrude", "extrude", "sketch", "fillet",
				"fillet", "fillet", "fillet", "sketch", "extrude",
			];

			// each feature sits above a tick, the rail joins the ticks together
			document.getElementById("timeline").innerHTML = features
				.map((name, i) => {
					const first = i === 0;
					const last = i === features.length - 1;
					const rail = first ? "ml-[13px] w-[31px]" : last ? "w-[17px]" : "w-[44px]";
					return `
				<div class="${last ? "w-[29px]" : "w-[44px]"}">
					<button class="block h-[29px]" aria-label="${name}"><svg class="size-[29px]"><use href="#${name}" /></svg></button>
					<div class="mt-[6px] h-[9px] w-1 bg-[#c9c9c9] ml-[13px]"></div>
					<div class="h-1 bg-[#c9c9c9] ${rail}"></div>
				</div>`;
				})
				.join("");
		</script>
	</body>
</html>
